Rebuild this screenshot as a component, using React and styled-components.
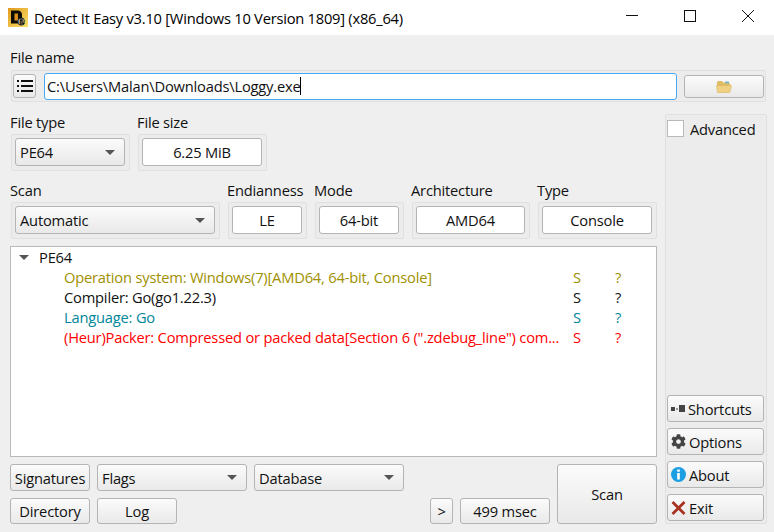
import React from 'react'
import styled, { createGlobalStyle } from 'styled-components'
import { FaCog } from 'react-icons/fa'

const GlobalStyle = createGlobalStyle`
  html, body { margin: 0; padding: 0; background: #efefef; }
  * { box-sizing: border-box; }
  body {
    font-family: "Open Sans", "Noto Sans", sans-serif;
    font-size: 14.7px;
    letter-spacing: -0.2px;
    color: #111;
  }
`

const Logo = () => (
  <svg width="20" height="19" viewBox="0 0 20 19">
    <defs>
      <linearGradient id="logoFill" x1="0" y1="0" x2="1" y2="1">
        <stop offset="0" stopColor="#e09a1c" />
        <stop offset="1" stopColor="#fbe06a" />
      </linearGradient>
    </defs>
    <rect width="20" height="19" fill="url(#logoFill)" />
    <path d="M3 2.5h6.5Q14 2.5 14 7v4Q14 15.5 9.5 15.5H3Z" fill="#0d0a02" />
    <rect x="6.5" y="5.5" width="3.5" height="7" fill="#d8901e" />
    <text
      x="9.5"
      y="17"
      fontFamily="Liberation Sans"
      fontWeight="700"
      fontSize="13"
      fill="#fff6d0"
      stroke="#111"
      strokeWidth="0.8"
    >
      e
    </text>
  </svg>
)

const MenuIcon = () => (
  <svg width="18" height="14" viewBox="0 0 18 14">
    <path d="M1 2h2M1 7h2M1 12h2" stroke="#111" strokeWidth="2" />
    <path d="M5 2h12M5 7h12M5 12h12" stroke="#111" strokeWidth="2" />
  </svg>
)

const FolderIcon = () => (
  <svg width="16" height="13" viewBox="0 0 16 13">
    <path d="M1 2.5 Q1 1 2.5 1H6L7 2.5H12.5Q14 2.5 14 4V6H1Z" fill="#dfbb66" />
    <path d="M9 1.5h4v2H9z" fill="#7fb6c4" />
    <path d="M0.5 5.5H15.5L13.8 12.5H1.5Z" fill="#f0d184" stroke="#dcb55e" strokeWidth="0.6" />
  </svg>
)

const ShortcutsIcon = () => (
  <svg width="14" height="8" viewBox="0 0 14 8">
    <path d="M0 2h4v4H0zM5 3.5h2v1H5zM8 0h6v7H8z" fill="#444" />
  </svg>
)

const InfoIcon = () => (
  <svg width="15" height="15" viewBox="0 0 15 15">
    <circle cx="7.5" cy="7.5" r="7.5" fill="#1b9fe2" />
    <path d="M6.2 2.5h2.6v2.2H6.2zM6.2 6h2.6v6.5H6.2z" fill="#fff" />
  </svg>
)

const ExitIcon = () => (
  <svg width="15" height="14" viewBox="0 0 15 14">
    <path d="M1.5 1 13.5 13M13.5 1 1.5 13" stroke="#a83220" strokeWidth="2.8" />
  </svg>
)

const Caret = styled.span`
  width: 0;
  height: 0;
  border-left: 5px solid transparent;
  border-right: 5px solid transparent;
  border-top: 5px solid #555;
`

const Window = styled.div`
  width: 774px;
  height: 532px;
  overflow: hidden;
  background: #efefef;
  display: flex;
  flex-direction: column;
`

const TitleBar = styled.header`
  height: 35px;
  flex: none;
  background: #fff;
  display: flex;
  align-items: center;
  padding-left: 8px;
  gap: 6px;
`

const TitleText = styled.span`
  flex: 1;
  color: #000;
  letter-spacing: -0.24px;
`

const WindowButtons = styled.div`
  display: flex;
  align-self: flex-start;
  margin-right: -3px;
`

const WindowButton = styled.div`
  width: 58px;
  height: 31px;
  display: flex;
  align-items: center;
  justify-content: center;
`

const Body = styled.div`
  flex: 1;
  display: grid;
  grid-template-columns: 647px 102px;
  column-gap: 8px;
  padding: 13px 0 0 10px;
  align-content: start;
  grid-template-areas: 'file file' 'left side';
`

const FileSection = styled.section`
  grid-area: file;
`

const LeftColumn = styled.div`
  grid-area: left;
  display: flex;
  flex-direction: column;
`

const Label = styled.div`
  height: 21px;
  line-height: 19px;
  white-space: nowrap;
`

const Group = styled.div`
  border: 1px solid #e0e0e0;
  background: #ececec;
  border-radius: 2px;
  padding: 3px 4px 3px 3px;
  height: 37px;
  margin-left: 1px;
`

const FileRow = styled.div`
  width: 755px;
  height: 32px;
  margin: 1px 0 0 1px;
  border: 1px solid #e0e0e0;
  background: #ececec;
  border-radius: 2px;
  display: flex;
  align-items: center;
  padding-left: 1px;
`

const Button = styled.button`
  font: inherit;
  letter-spacing: inherit;
  color: #111;
  height: ${p => p.$h || 27}px;
  width: ${p => p.$w}px;
  flex: none;
  border: 1px solid #b4b4b4;
  border-radius: 3px;
  background: linear-gradient(#fbfbfb, #e9e9e9);
  display: flex;
  align-items: center;
  justify-content: center;
  padding: 0;
`

const FileInput = styled.div`
  width: 633px;
  height: 27px;
  margin: 0 7px 0 8px;
  flex: none;
  background: #fff;
  border: 1px solid #4aa8f5;
  border-radius: 3px;
  padding-left: 2px;
  display: flex;
  align-items: center;
`

const TextCursor = styled.i`
  display: inline-block;
  width: 1px;
  height: 18px;
  background: #000;
`

const Row = styled.div`
  display: flex;
  gap: 7px;
  margin-top: ${p => p.$top}px;
`

const Column = styled.div`
  width: ${p => p.$w}px;
  flex: none;
`

const Value = styled.div`
  height: 28px;
  background: #fff;
  border: 1px solid #b4b4b4;
  border-radius: 3px;
  display: flex;
  align-items: center;
  justify-content: center;
`

const Combo = styled.div`
  height: ${p => p.$h || 28}px;
  border: 1px solid #b4b4b4;
  border-radius: 3px;
  background: linear-gradient(#fbfbfb, #e9e9e9);
  display: flex;
  align-items: center;
  justify-content: space-between;
  padding: 0 9px 0 4px;
`

const Tree = styled.div`
  margin-top: 7px;
  height: 211px;
  background: #fff;
  border: 1px solid #b9b9b9;
`

const TreeRoot = styled.div`
  height: 20px;
  display: flex;
  align-items: center;
  padding-left: 8px;
  gap: 10px;
`

const TreeRow = styled.div`
  height: 20px;
  padding-left: 53px;
  display: grid;
  grid-template-columns: 497px 54px 20px;
  align-items: center;
  white-space: nowrap;
  color: ${p => p.$color || '#111'};
`

const Flag = styled.span`
  padding-left: ${p => p.$pad}px;
`

const Footer = styled.div`
  margin-top: 7px;
  display: grid;
  grid-template-columns: 80px 150px 150px 139px 100px;
  column-gap: 7px;
  grid-template-rows: 27px 26px;
  row-gap: 7px;
`

const SecondRow = styled.div`
  grid-column: 2 / 5;
  display: flex;
  align-items: center;
  gap: 7px;
`

const Spacer = styled.div`
  flex: 1;
`

const ScanButton = styled(Button)`
  grid-column: 5;
  grid-row: 1 / 3;
  height: 60px;
`

const SidePanel = styled.aside`
  grid-area: side;
  margin-top: 12px;
  height: 410px;
  border: 1px solid #e0e0e0;
  background: #ececec;
  border-radius: 2px;
  padding: 5px 2px 2px 1px;
  display: flex;
  flex-direction: column;
  gap: 6px;
`

const AdvancedRow = styled.label`
  display: flex;
  align-items: center;
  gap: 6px;
  height: 17px;
`

const CheckBox = styled.span`
  width: 17px;
  height: 17px;
  background: #fff;
  border: 1px solid #b9b9b9;
`

const SideButton = styled(Button)`
  justify-content: flex-start;
  padding-left: 3px;
  gap: 3px;
  svg { flex: none; }
`

const ROWS = [
  { color: '#a09000', text: 'Operation system: Windows(7)[AMD64, 64-bit, Console]' },
  { color: '#111', text: 'Compiler: Go(go1.22.3)' },
  { color: '#00879a', text: 'Language: Go' },
  { color: '#f00', text: '(Heur)Packer: Compressed or packed data[Section 6 (".zdebug_line") com...' },
]

export default function App() {
  return (
    <Window>
      <GlobalStyle />
      <TitleBar>
        <Logo />
        <TitleText>Detect It Easy v3.10 [Windows 10 Version 1809] (x86_64)</TitleText>
        <WindowButtons>
          <WindowButton>
            <svg width="12" height="1" viewBox="0 0 12 1"><path d="M0 .5h12" stroke="#111" /></svg>
          </WindowButton>
          <WindowButton>
            <svg width="12" height="12" viewBox="0 0 12 12"><rect x="0.5" y="0.5" width="11" height="11" fill="none" stroke="#111" /></svg>
          </WindowButton>
          <WindowButton>
            <svg width="12" height="12" viewBox="0 0 12 12"><path d="M0 0 12 12M12 0 0 12" stroke="#111" /></svg>
          </WindowButton>
        </WindowButtons>
      </TitleBar>

      <Body>
        <FileSection>
          <Label>File name</Label>
          <FileRow>
            <Button $w={23} $h={24}><MenuIcon /></Button>
            <FileInput>C:\Users\Malan\Downloads\Loggy.exe<TextCursor /></FileInput>
            <Button $w={80} $h={23}><FolderIcon /></Button>
          </FileRow>
        </FileSection>

        <LeftColumn>
          <Row $top={11}>
            <Column $w={120}>
              <Label>File type</Label>
              <Group><Combo>PE64<Caret /></Combo></Group>
            </Column>
            <Column $w={130}>
              <Label>File size</Label>
              <Group><Value>6.25 MiB</Value></Group>
            </Column>
          </Row>

          <Row $top={10}>
            <Column $w={210}>
              <Label>Scan</Label>
              <Group><Combo>Automatic<Caret /></Combo></Group>
            </Column>
            <Column $w={80}>
              <Label>Endianness</Label>
              <Group><Value>LE</Value></Group>
            </Column>
            <Column $w={90}>
              <Label>Mode</Label>
              <Group><Value>64-bit</Value></Group>
            </Column>
            <Column $w={119}>
              <Label>Architecture</Label>
              <Group><Value>AMD64</Value></Group>
            </Column>
            <Column $w={120}>
              <Label>Type</Label>
              <Group><Value>Console</Value></Group>
            </Column>
          </Row>

          <Tree>
            <TreeRoot><Caret />PE64</TreeRoot>
            {ROWS.map(row => (
              <TreeRow key={row.text} $color={row.color}>
                <span>{row.text}</span>
                <Flag $pad={12}>S</Flag>
                <Flag $pad={0}>?</Flag>
              </TreeRow>
            ))}
          </Tree>

          <Footer>
            <Button $w={80}>Signatures</Button>
            <Combo $h={27}>Flags<Caret /></Combo>
            <Combo $h={27}>Database<Caret /></Combo>
            <Spacer />
            <ScanButton $w={100}>Scan</ScanButton>
            <Button $w={80} $h={26}>Directory</Button>
            <SecondRow>
              <Button $w={80} $h={26}>Log</Button>
              <Spacer />
              <Button $w={23} $h={26}>&gt;</Button>
              <Button $w={90} $h={26}>499 msec</Button>
            </SecondRow>
          </Footer>
        </LeftColumn>

        <SidePanel>
          <AdvancedRow><CheckBox />Advanced</AdvancedRow>
          <Spacer />
          <SideButton $w={97}><ShortcutsIcon />Shortcuts</SideButton>
          <SideButton $w={97}><FaCog size={15} color="#444" />Options</SideButton>
          <SideButton $w={97}><InfoIcon />About</SideButton>
          <SideButton $w={97}><ExitIcon />Exit</SideButton>
        </SidePanel>
      </Body>
    </Window>
  )
}
